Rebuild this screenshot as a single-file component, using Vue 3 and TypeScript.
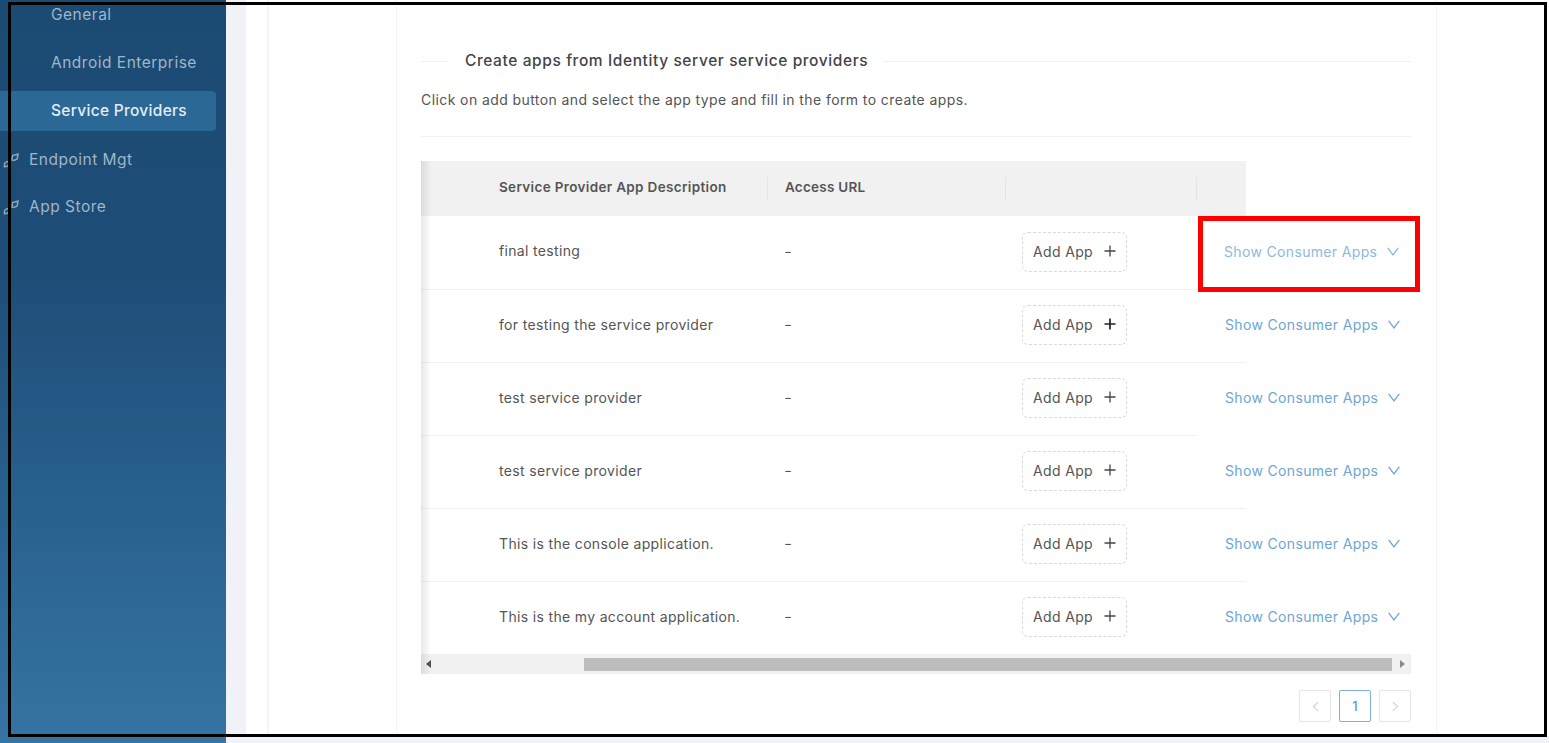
<script setup lang="ts">
const rows = [
  { text: 'final testing', lineEnd: 'short', flagged: true },
  { text: 'for testing the service provider', lineEnd: 'long', flagged: false },
  { text: 'test service provider', lineEnd: 'short', flagged: false },
  { text: 'test service provider', lineEnd: 'long', flagged: false },
  { text: 'This is the console application.', lineEnd: 'long', flagged: false },
  { text: 'This is the my account application.', lineEnd: 'long', flagged: false },
]
const subItems = ['General', 'Android Enterprise', 'Service Providers']
const mainItems = ['Endpoint Mgt', 'App Store']
</script>

<template>
  <div class="page">
    <aside class="sidebar">
      <div
        v-for="item in subItems"
        :key="item"
        class="sub-item"
        :class="{ active: item === 'Service Providers' }"
      >{{ item }}</div>
      <div v-for="item in mainItems" :key="item" class="main-item">
        <svg class="nav-icon" viewBox="0 0 16 16" fill="none" stroke="currentColor" stroke-width="1.5">
          <path d="M1.500 14.800V11.500L4 9.500l2 .6-.8 4z" />
          <path d="M9 8l.6-4.500L15 2l-.8 5-3.200 1.500z" />
        </svg>
        <span>{{ item }}</span>
      </div>
    </aside>

    <main class="main">
      <div class="outer-card">
        <div class="inner-card">
          <div class="panel">
            <div class="section-head">
              <span class="head-line head-line-left"></span>
              <h2 class="title">Create apps from Identity server service providers</h2>
              <span class="head-line"></span>
            </div>
            <p class="intro">Click on add button and select the app type and fill in the form to create apps.</p>
            <div class="rule"></div>

            <div class="table-wrap">
              <div class="thead">
                <div class="th col-desc">Service Provider App Description</div>
                <div class="th col-url">Access URL</div>
                <div class="th col-add"></div>
                <div class="th col-tail"></div>
              </div>
              <div v-for="(row, i) in rows" :key="i" class="tr">
                <div class="td col-desc">{{ row.text }}</div>
                <div class="td col-url">-</div>
                <div class="td col-add">
                  <button class="add-btn" type="button">
                    <span>Add App</span>
                    <svg viewBox="0 0 12 12" width="12" height="12" fill="none" stroke="#444" stroke-width="1.3">
                      <path d="M6 .5v11M.5 6h11" />
                    </svg>
                  </button>
                </div>
                <div class="td col-show" :class="[row.lineEnd, { flagged: row.flagged }]">
                  <span>Show Consumer Apps</span>
                  <svg viewBox="0 0 12 9" width="12" height="9" fill="none" stroke="currentColor" stroke-width="1.3">
                    <path d="M.7.8 6 7.800 11.300.8" />
                  </svg>
                </div>
              </div>
              <div class="scrollbar">
                <span class="arrow arrow-left"></span>
                <span class="thumb"></span>
                <span class="arrow arrow-right"></span>
              </div>
            </div>

            <nav class="pager">
              <span class="page-btn">
                <svg viewBox="0 0 8 12" width="7" height="11" fill="none" stroke="#cfcfcf" stroke-width="1.2"><path d="M7 1 1.500 6 7 11" /></svg>
              </span>
              <span class="page-btn current">1</span>
              <span class="page-btn">
                <svg viewBox="0 0 8 12" width="7" height="11" fill="none" stroke="#cfcfcf" stroke-width="1.2"><path d="M1 1l5.500 5L1 11" /></svg>
              </span>
            </nav>
          </div>
        </div>
      </div>
    </main>

    <div class="frame"></div>
    <div class="highlight"></div>
  </div>
</template>

<style>
html, body { margin: 0; background: #f0f2f7; }
</style>

<style scoped>
* { box-sizing: border-box; }
.page {
  position: relative;
  display: flex;
  width: 1549px;
  height: 743px;
  overflow: hidden;
  background: #f0f2f7;
  font-family: Inter, "Open Sans", sans-serif;
  color: #4a4a4a;
}
.sidebar {
  flex: 0 0 226px;
  height: 743px;
  background: linear-gradient(180deg, #1b4a73 0%, #1d4c76 35%, #3574a3 100%);
  color: #9fb6ca;
  font-size: 15.5px;
  letter-spacing: .5px;
}
.sub-item {
  height: 48px;
  margin-right: 10px;
  padding-left: 51px;
  display: flex;
  align-items: center;
  border-radius: 0 4px 4px 0;
}
.sub-item:first-child { margin-top: -10px; }
.sub-item.active {
  height: 40px;
  margin-top: 5px;
  margin-bottom: 5px;
  padding-bottom: 1px;
  background: #2b6896;
  color: #e4edf4;
  font-weight: 500;
  letter-spacing: .3px;
}
.main-item {
  height: 47px;
  display: flex;
  align-items: center;
  gap: 10px;
  padding-left: 3px;
}
.nav-icon { width: 16px; height: 16px; color: #8aa5bd; }
.main {
  flex: 1;
  padding-left: 20px;
  min-width: 0;
}
.outer-card {
  height: 736px;
  background: #fff;
  padding-left: 21px;
}
.inner-card {
  height: 100%;
  border-left: 2px solid #f5f5f8;
  padding-left: 127px;
}
.panel {
  width: 1041px;
  height: 100%;
  padding: 49px 25px 0 24px;
  border-left: 1px solid #f3f3f5;
  border-right: 1px solid #f3f3f5;
}
.section-head {
  display: flex;
  align-items: center;
  height: 24px;
}
.head-line { flex: 1; height: 1px; background: #efefef; }
.head-line-left { flex: 0 0 27px; }
.title {
  margin: 0 16px 2px 17px;
  font-size: 15.5px;
  font-weight: 500;
  letter-spacing: .6px;
  color: #444;
  white-space: nowrap;
}
.intro {
  margin: 15px 0 0;
  height: 24px;
  line-height: 24px;
  font-size: 14px;
  letter-spacing: .41px;
  color: #555;
}
.rule {
  height: 1px;
  margin-top: 24px;
  background: #f0f0f0;
}
.table-wrap {
  position: relative;
  margin-top: 24px;
}
.table-wrap::before {
  content: "";
  position: absolute;
  left: 0;
  top: 0;
  width: 10px;
  height: 513px;
  background: linear-gradient(90deg, rgba(0,0,0,.09), rgba(0,0,0,0));
  z-index: 1;
}
.thead {
  display: grid;
  grid-template-columns: 347px 238px 191px 49px;
  width: 825px;
  height: 56px;
  padding-bottom: 5px;
  background: linear-gradient(180deg, #f1f1f1 55px, #fff 55px);
  font-size: 13.5px;
  font-weight: 600;
  letter-spacing: .25px;
  color: #555;
}
.thead .col-desc { letter-spacing: .34px; }
.th {
  position: relative;
  display: flex;
  align-items: center;
}
.th::after {
  content: "";
  position: absolute;
  right: 0;
  top: 16px;
  height: 23px;
  width: 1px;
  background: #e4e4e4;
}
.th.col-tail::after { display: none; }
.col-desc { padding-left: 78px; }
.col-url { padding-left: 17px; }
.tr {
  display: grid;
  grid-template-columns: 347px 238px 191px 214px;
  height: 73px;
  font-size: 14px;
  letter-spacing: .34px;
  color: #555;
}
.td {
  display: flex;
  align-items: center;
  padding-bottom: 4px;
  border-bottom: 1px solid #f1f1f1;
}
.td.col-url { font-size: 18px; font-weight: 300; padding-left: 16px; }
.td.col-add { padding-bottom: 2px; padding-left: 16px; }
.tr:nth-child(2) .td.col-desc { padding-bottom: 6px; }
.add-btn {
  display: flex;
  align-items: center;
  justify-content: center;
  gap: 11px;
  width: 105px;
  height: 40px;
  padding: 0 0 2px;
  background: #fff;
  border: 1px dashed #d9d9d9;
  border-radius: 6px;
  font: inherit;
  letter-spacing: inherit;
  color: #555;
}
.tr:nth-child(3) .add-btn svg { stroke: #222; stroke-width: 1.7; }
.col-show {
  padding-left: 28px;
  padding-bottom: 4px;
  gap: 10px;
  color: #6ea6d2;
  border-bottom: 0;
  position: relative;
}
.col-show.long::after {
  content: "";
  position: absolute;
  left: 0;
  bottom: 0;
  width: 49px;
  height: 1px;
  background: #f1f1f1;
}
.col-show.flagged { color: #8cbadd; padding-left: 27px; }
.scrollbar {
  position: relative;
  display: flex;
  align-items: center;
  height: 20px;
  margin-top: -1px;
  background: #f1f1f1;
}
.thumb {
  position: absolute;
  left: 163px;
  width: 808px;
  top: 4px;
  height: 13px;
  background: #bdbdbd;
}
.arrow {
  position: absolute;
  top: 6px;
  width: 0;
  height: 0;
  border-top: 4px solid transparent;
  border-bottom: 4px solid transparent;
}
.arrow-left { left: 5px; border-right: 5px solid #505050; }
.arrow-right { right: 6px; border-left: 5px solid #8a8a8a; }
.pager {
  display: flex;
  justify-content: flex-end;
  gap: 8px;
  margin-top: 16px;
}
.page-btn {
  display: flex;
  align-items: center;
  justify-content: center;
  width: 32px;
  height: 32px;
  border: 1px solid #e6e6e6;
  border-radius: 2px;
  background: #fff;
}
.page-btn.current {
  border-color: #7fb0d6;
  color: #5c9ccb;
  font-size: 13px;
  font-weight: 500;
}
.frame {
  position: absolute;
  left: 8px;
  top: 2px;
  width: 1539px;
  height: 735px;
  border: 3px solid #000;
  pointer-events: none;
}
.highlight {
  position: absolute;
  left: 1198px;
  top: 216px;
  width: 222px;
  height: 76px;
  border: 5px solid #f00;
  pointer-events: none;
}
</style>
